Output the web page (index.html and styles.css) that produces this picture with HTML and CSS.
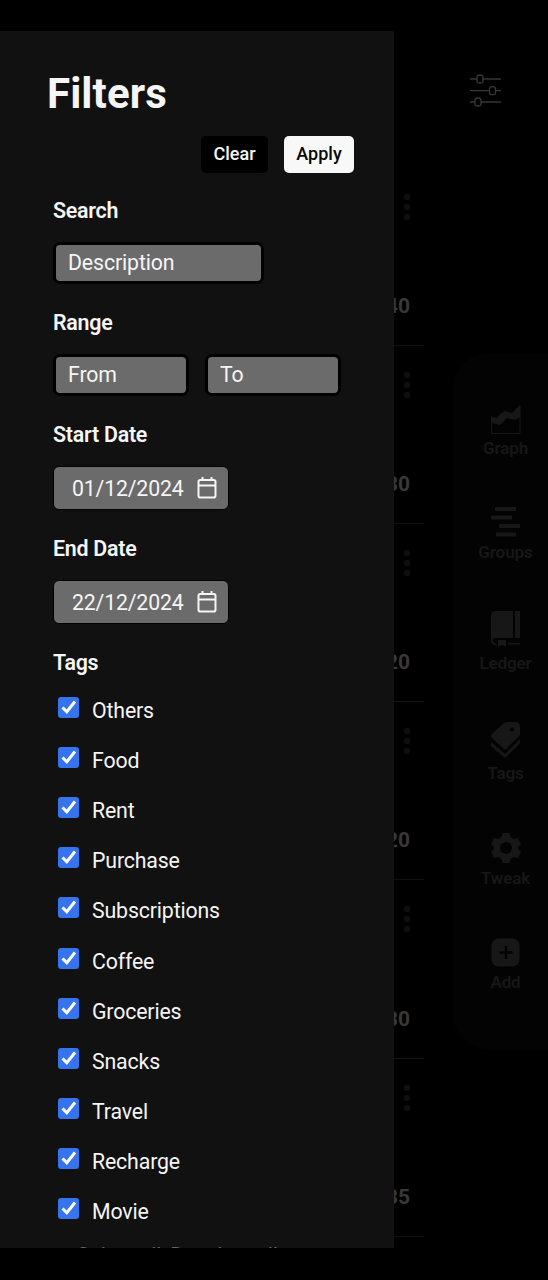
FILE: index.html
```html
<!DOCTYPE html>
<html lang="en">
<head>
<meta charset="utf-8">
<title>Filters</title>
<link rel="stylesheet" href="styles.css">
</head>
<body>
<div class="screen">
  <main class="page">
    <header class="topbar">
      <svg class="sliders" width="34" height="36" viewBox="0 0 34 36" fill="none" stroke="#363636" stroke-width="1.3"><path d="M1 7h7M14 7h18M1 18.700h19M26 18.700h6M1 30h5M12 30h20"/><rect x="8" y="3" width="6" height="8" rx="2.500"/><rect x="20.500" y="14.700" width="6" height="8" rx="2.500"/><rect x="6" y="26" width="6" height="8" rx="2.500"/></svg>
    </header>
    <div class="content">
      <section class="expenses">
        <article class="expense"><span class="dots"><i></i><i></i><i></i></span><b>40</b></article>
        <article class="expense"><span class="dots"><i></i><i></i><i></i></span><b>30</b></article>
        <article class="expense"><span class="dots"><i></i><i></i><i></i></span><b>20</b></article>
        <article class="expense"><span class="dots"><i></i><i></i><i></i></span><b>20</b></article>
        <article class="expense"><span class="dots"><i></i><i></i><i></i></span><b>30</b></article>
        <article class="expense"><span class="dots"><i></i><i></i><i></i></span><b>35</b></article>
      </section>
      <nav class="rail">
        <a class="rail-item graph"><svg width="30" height="30" viewBox="0 0 30 30"><path d="M.5 11v17.500h28.500V1" fill="none" stroke="#171717"/><path d="M1 12l5 1 3-4 5-3 7 2L29 0v12l-5 3-8-2-7 7-8-2z" fill="#171717"/></svg><span>Graph</span></a>
        <a class="rail-item groups"><svg width="30" height="30" viewBox="0 0 30 30" fill="#171717"><path d="M4 0h21v4H4zM0 8.500h21v4H0zM8 17h21v4H8zM5 25.500h20v4H5z"/></svg><span>Groups</span></a>
        <a class="rail-item ledger"><svg width="30" height="36" viewBox="0 0 30 36" fill="#171717"><path d="M5 0h17v27H5q-3 0-3 3 0 2.500 4 3v1.500q-6-.5-6-5V5q0-5 5-5zM24 0h5v27h-5zM7 29h8v7l-4-2-4 2zM17 32h12v1.500H17z"/></svg><span>Ledger</span></a>
        <a class="rail-item tags"><svg width="30" height="36" viewBox="0 0 30 36" fill="#171717"><path fill-rule="evenodd" d="M17 0h7q5 0 5 5v8L14 28 1 16q-2-2 0-4L13 1q2-1 4-1zM21 5.500a2 2 0 1 0 .1 0z"/><path d="M0 20l14 12L29 17v4L14 36 0 24z"/></svg><span>Tags</span></a>
        <a class="rail-item tweak"><svg width="30" height="30" viewBox="0 0 30 30"><path fill="#171717" fill-rule="evenodd" d="M11.500 0h7l1 4 3 2 4.500-1 3 6-3 3v2l3 3-3 6-4.500-1-3 2-1 4h-7l-1-4-3-2L3 25l-3-6 3-3v-2l-3-3 3-6 4.500 1 3-2zM15 9a6 6 0 1 0 .1 0z"/></svg><span>Tweak</span></a>
        <a class="rail-item add"><svg width="30" height="30" viewBox="0 0 30 30"><rect x=".5" y=".5" width="28" height="28" rx="7" fill="#171717"/><path d="M15 8v13M8.500 14.500h13" stroke="#040404" stroke-width="2.500"/></svg><span>Add</span></a>
      </nav>
    </div>
  </main>

  <aside class="drawer">
    <h1>Filters</h1>
    <div class="actions"><button class="btn clear">Clear</button><button class="btn apply">Apply</button></div>
    <section class="field"><h2>Search</h2><div class="inputs"><input class="input wide" placeholder="Description"></div></section>
    <section class="field"><h2>Range</h2><div class="inputs"><input class="input" placeholder="From"><input class="input" placeholder="To"></div></section>
    <section class="field date-field"><h2>Start Date</h2><div class="date"><span>01/12/2024</span><svg width="20" height="22" viewBox="0 0 20 22" fill="none" stroke="#f5f5f5" stroke-width="2"><rect x="1.500" y="3" width="17" height="17.500" rx="1.800"/><path d="M1.500 8.500h17M5.500 0v4M14.500 0v4"/></svg></div></section>
    <section class="field date-field"><h2>End Date</h2><div class="date"><span>22/12/2024</span><svg width="20" height="22" viewBox="0 0 20 22" fill="none" stroke="#f5f5f5" stroke-width="2"><rect x="1.500" y="3" width="17" height="17.500" rx="1.800"/><path d="M1.500 8.500h17M5.500 0v4M14.500 0v4"/></svg></div></section>
    <section class="field"><h2>Tags</h2>
      <div class="checks">
        <label><span class="box"><svg width="21" height="21" viewBox="0 0 21 21"><path d="M4.500 10.500l4.300 4.300L17 4.500"/></svg></span>Others</label>
        <label><span class="box"><svg width="21" height="21" viewBox="0 0 21 21"><path d="M4.500 10.500l4.300 4.300L17 4.500"/></svg></span>Food</label>
        <label><span class="box"><svg width="21" height="21" viewBox="0 0 21 21"><path d="M4.500 10.500l4.300 4.300L17 4.500"/></svg></span>Rent</label>
        <label><span class="box"><svg width="21" height="21" viewBox="0 0 21 21"><path d="M4.500 10.500l4.300 4.300L17 4.500"/></svg></span>Purchase</label>
        <label><span class="box"><svg width="21" height="21" viewBox="0 0 21 21"><path d="M4.500 10.500l4.300 4.300L17 4.500"/></svg></span>Subscriptions</label>
        <label><span class="box"><svg width="21" height="21" viewBox="0 0 21 21"><path d="M4.500 10.500l4.300 4.300L17 4.500"/></svg></span>Coffee</label>
        <label><span class="box"><svg width="21" height="21" viewBox="0 0 21 21"><path d="M4.500 10.500l4.300 4.300L17 4.500"/></svg></span>Groceries</label>
        <label><span class="box"><svg width="21" height="21" viewBox="0 0 21 21"><path d="M4.500 10.500l4.300 4.300L17 4.500"/></svg></span>Snacks</label>
        <label><span class="box"><svg width="21" height="21" viewBox="0 0 21 21"><path d="M4.500 10.500l4.300 4.300L17 4.500"/></svg></span>Travel</label>
        <label><span class="box"><svg width="21" height="21" viewBox="0 0 21 21"><path d="M4.500 10.500l4.300 4.300L17 4.500"/></svg></span>Recharge</label>
        <label><span class="box"><svg width="21" height="21" viewBox="0 0 21 21"><path d="M4.500 10.500l4.300 4.300L17 4.500"/></svg></span>Movie</label>
      </div>
      <div class="bulk"><span>Select all</span><span>Deselect all</span></div>
    </section>
  </aside>
</div>
</body>
</html>
```
FILE: styles.css
```css
* { box-sizing: border-box; }
body { margin: 0; background: #000; font-family: Roboto, sans-serif; color: #f5f5f5; }
.screen { position: relative; width: 548px; height: 1280px; overflow: hidden; background: #000; }
.page { height: 1280px; overflow: hidden; }
.topbar { display: flex; justify-content: flex-end; height: 168px; padding: 72px 45px 0 0; }
.content { display: flex; justify-content: space-between; align-items: flex-start; }
.expenses { width: 424px; }
.expense { display: flex; flex-direction: column; justify-content: space-between; align-items: flex-end; height: 178.120px; padding: 26px 14px 26px 0; border-bottom: 1px solid #121212; }
.expense b { font-size: 21px; line-height: 26px; font-weight: 700; color: #383838; }
.dots { display: flex; flex-direction: column; gap: 4px; }
.dots i { width: 6px; height: 6px; border-radius: 2px; background: #0f0f0f; }
.rail { width: 95px; height: 695px; margin-top: 186px; padding: 51px 0 0; border-radius: 34px 0 0 34px; background: #030303; overflow: hidden; }
.rail-item { display: flex; flex-direction: column; align-items: center; width: 105px; font-size: 17px; line-height: 20px; font-weight: 600; letter-spacing: -.1px; color: #171717; }
.rail-item svg { flex: none; }
.graph { height: 102px; gap: 3px; }
.groups { height: 104px; gap: 5px; }
.ledger { height: 111px; gap: 6px; }
.tags { height: 111px; gap: 5px; }
.tweak { height: 105px; gap: 5px; }
.add { gap: 4px; }

.drawer { position: absolute; left: 0; top: 31px; width: 394px; height: 1217px; overflow: hidden; background: #111; padding: 39px 40px 0 53px; }
h1 { margin: 0 0 0 -6px; font-size: 42px; line-height: 48px; font-weight: 700; letter-spacing: .1px; }
.actions { display: flex; justify-content: flex-end; gap: 16px; margin-top: 18px; margin-bottom: 25px; }
.btn { height: 37px; padding: 0 0 1px; border: 0; border-radius: 5px; font: 500 18px/36px Roboto, sans-serif; }
.clear { width: 67px; background: #000; color: #f5f5f5; }
.apply { width: 70px; background: #f8f8f8; color: #080808; }
.field { height: 112px; }
.date-field { height: 114px; }
h2 { margin: 0 0 19px; font-size: 21.400px; line-height: 25px; font-weight: 600; letter-spacing: -.25px; }
.inputs { display: flex; gap: 16px; }
.input { width: 136px; height: 42px; padding: 0 12px 2px; border: 3px solid #000; border-radius: 7px; background: #6b6b6b; font: 400 21.300px/34px Roboto, sans-serif; letter-spacing: -.12px; color: #f5f5f5; outline: 0; }
.input::placeholder { color: #f5f5f5; opacity: 1; }
.wide { width: 211px; }
.date { display: flex; align-items: center; width: 176px; height: 44px; padding: 0 11px 0 18px; border: 1px solid #000; border-radius: 6px; background: #6b6b6b; font-size: 21.300px; letter-spacing: -.18px; justify-content: space-between; }
.checks { margin-top: -9px; }
.checks label { display: flex; align-items: center; gap: 13px; height: 50.200px; padding-left: 5px; font-size: 21.300px; letter-spacing: -.15px; }
.box { width: 21px; height: 21px; margin-bottom: 6px; border-radius: 3px; background: #3574ed; }
.box svg { display: block; fill: none; stroke: #fff; stroke-width: 3; }
.bulk { display: flex; gap: 9px; padding: 6.200px 0 0 24px; font-size: 21.300px; line-height: 25px; letter-spacing: -.15px; color: #666; }
```
